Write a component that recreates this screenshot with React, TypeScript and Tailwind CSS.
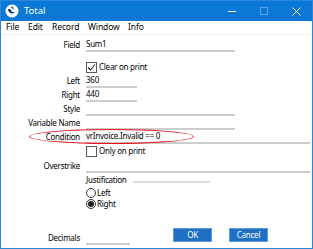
import React from "react";

const font = { fontFamily: '"Noto Sans", "Open Sans", sans-serif' };

function Row({
  label,
  children,
  className = "",
}: {
  label?: string;
  children?: React.ReactNode;
  className?: string;
}) {
  return (
    <div className={`flex items-center h-[14px] ${className}`}>
      <div className="w-[79px] shrink-0 text-right leading-none">{label}</div>
      <div className="ml-[6px] flex-1 flex items-center h-full">{children}</div>
    </div>
  );
}

function Line({ w, text }: { w: string; text?: string }) {
  return (
    <div className={`${w} h-[14px] border-b-2 border-[#cdcdcd] flex items-center leading-none`}>
      {text}
    </div>
  );
}

function Check({ label, checked }: { label: string; checked?: boolean }) {
  return (
    <div className="flex items-center gap-[2px] leading-none">
      <span className="w-[11px] h-[11px] border border-[#5a5a5a] flex items-center justify-center">
        {checked && (
          <svg width="9" height="9" viewBox="0 0 9 9">
            <path d="M1 4.5 L3.5 7 L8 1.5" fill="none" stroke="#222" strokeWidth="1.1" />
          </svg>
        )}
      </span>
      <span>{label}</span>
    </div>
  );
}

function Radio({ label, on }: { label: string; on?: boolean }) {
  return (
    <div className="flex items-center h-[11px] gap-[1px] leading-none">
      <span className="w-[10px] h-[10px] rounded-full border border-[#333] flex items-center justify-center">
        {on && <span className="w-[6px] h-[6px] rounded-full bg-[#222]" />}
      </span>
      <span>{label}</span>
    </div>
  );
}

export default function App() {
  return (
    <div
      className="relative w-[313px] h-[249px] border border-[#2a88dc] bg-white flex flex-col text-[8px] tracking-[-0.25px] text-black"
      style={font}
    >
      {/* title bar */}
      <div className="h-[20px] bg-[#0b78d6] flex items-center text-white shrink-0 tracking-normal">
        <svg className="ml-[4px]" width="14" height="14" viewBox="0 0 14 14">
          <circle cx="7" cy="7" r="6.5" fill="#fff" />
          <path d="M3 5 C3 10 9 11 11 7 C10 9 6 9 5.5 5 Z" fill="#12357a" />
          <path d="M6 3 L8 2.5 L8.5 6 Z" fill="#12357a" />
        </svg>
        <span className="ml-[5px] text-[9.5px] leading-none">Total</span>
        <div className="ml-auto flex items-center">
          <span className="w-[8px] h-[1px] bg-white mr-[24px]" />
          <span className="w-[8px] h-[8px] border border-[#5da6e6] mr-[24px]" />
          <svg className="mr-[11px]" width="9" height="9" viewBox="0 0 9 9">
            <path d="M0.5 0.5 L8.5 8.5 M8.5 0.5 L0.5 8.5" stroke="#fff" strokeWidth="1" />
          </svg>
        </div>
      </div>

      {/* menu bar */}
      <div className="h-[13px] flex items-center pl-[5px] text-[8.5px] tracking-[-0.1px] leading-none shrink-0">
        <span className="w-[22px]">File</span>
        <span className="w-[24px]">Edit</span>
        <span className="w-[36px]">Record</span>
        <span className="w-[40px]">Window</span>
        <span>Info</span>
      </div>
      <div className="h-[1px] bg-[#eeeeee] shrink-0" />

      {/* form */}
      <div className="flex flex-col pt-[3px]">
        <Row label="Field">
          <Line w="w-[149px]" text="Sum1" />
        </Row>
        <Row className="mt-[8px] h-[13px]">
          <Check label="Clear on print" checked />
        </Row>
        <Row label="Left">
          <Line w="w-[51px]" text="360" />
        </Row>
        <Row label="Right">
          <Line w="w-[51px]" text="440" />
        </Row>
        <Row label="Style">
          <Line w="w-[149px]" />
        </Row>
        <Row label="Variable Name">
          <Line w="w-[149px]" />
        </Row>
        <Row label="Condition">
          <Line w="w-[224px]" text="vrInvoice.Invalid == 0" />
        </Row>
        <Row>
          <Check label="Only on print" />
        </Row>
        <Row label="Overstrike" className="mt-[1px]">
          <Line w="w-[224px]" />
        </Row>
        <Row>
          <div className="flex items-center w-full">
            <span className="leading-none">Justification</span>
            <span className="ml-[6px] w-[77px] h-[2px] bg-[#dcdcdc] mt-[4px]" />
          </div>
        </Row>
        <div className="ml-[85px] flex flex-col">
          <Radio label="Left" />
          <Radio label="Right" on />
        </div>

        <div className="flex items-start mt-[19px]">
          <div className="flex items-center h-[14px] mt-[3px]">
            <div className="w-[79px] text-right leading-none">Decimals</div>
            <div className="ml-[6px]">
              <Line w="w-[44px]" />
            </div>
          </div>
          <button className="ml-[43px] w-[39px] h-[14px] bg-[#1f6fc2] border border-[#5b9be0] text-white leading-none">
            OK
          </button>
          <button className="ml-[17px] w-[39px] h-[14px] bg-[#1f6fc2] border border-[#5b9be0] text-white leading-none">
            Cancel
          </button>
        </div>
      </div>

      {/* red annotation ellipse */}
      <div className="absolute left-[28px] top-[128px] w-[165px] h-[15px] rounded-[50%] border-[1.5px] border-[#e8101a]" />
    </div>
  );
}
